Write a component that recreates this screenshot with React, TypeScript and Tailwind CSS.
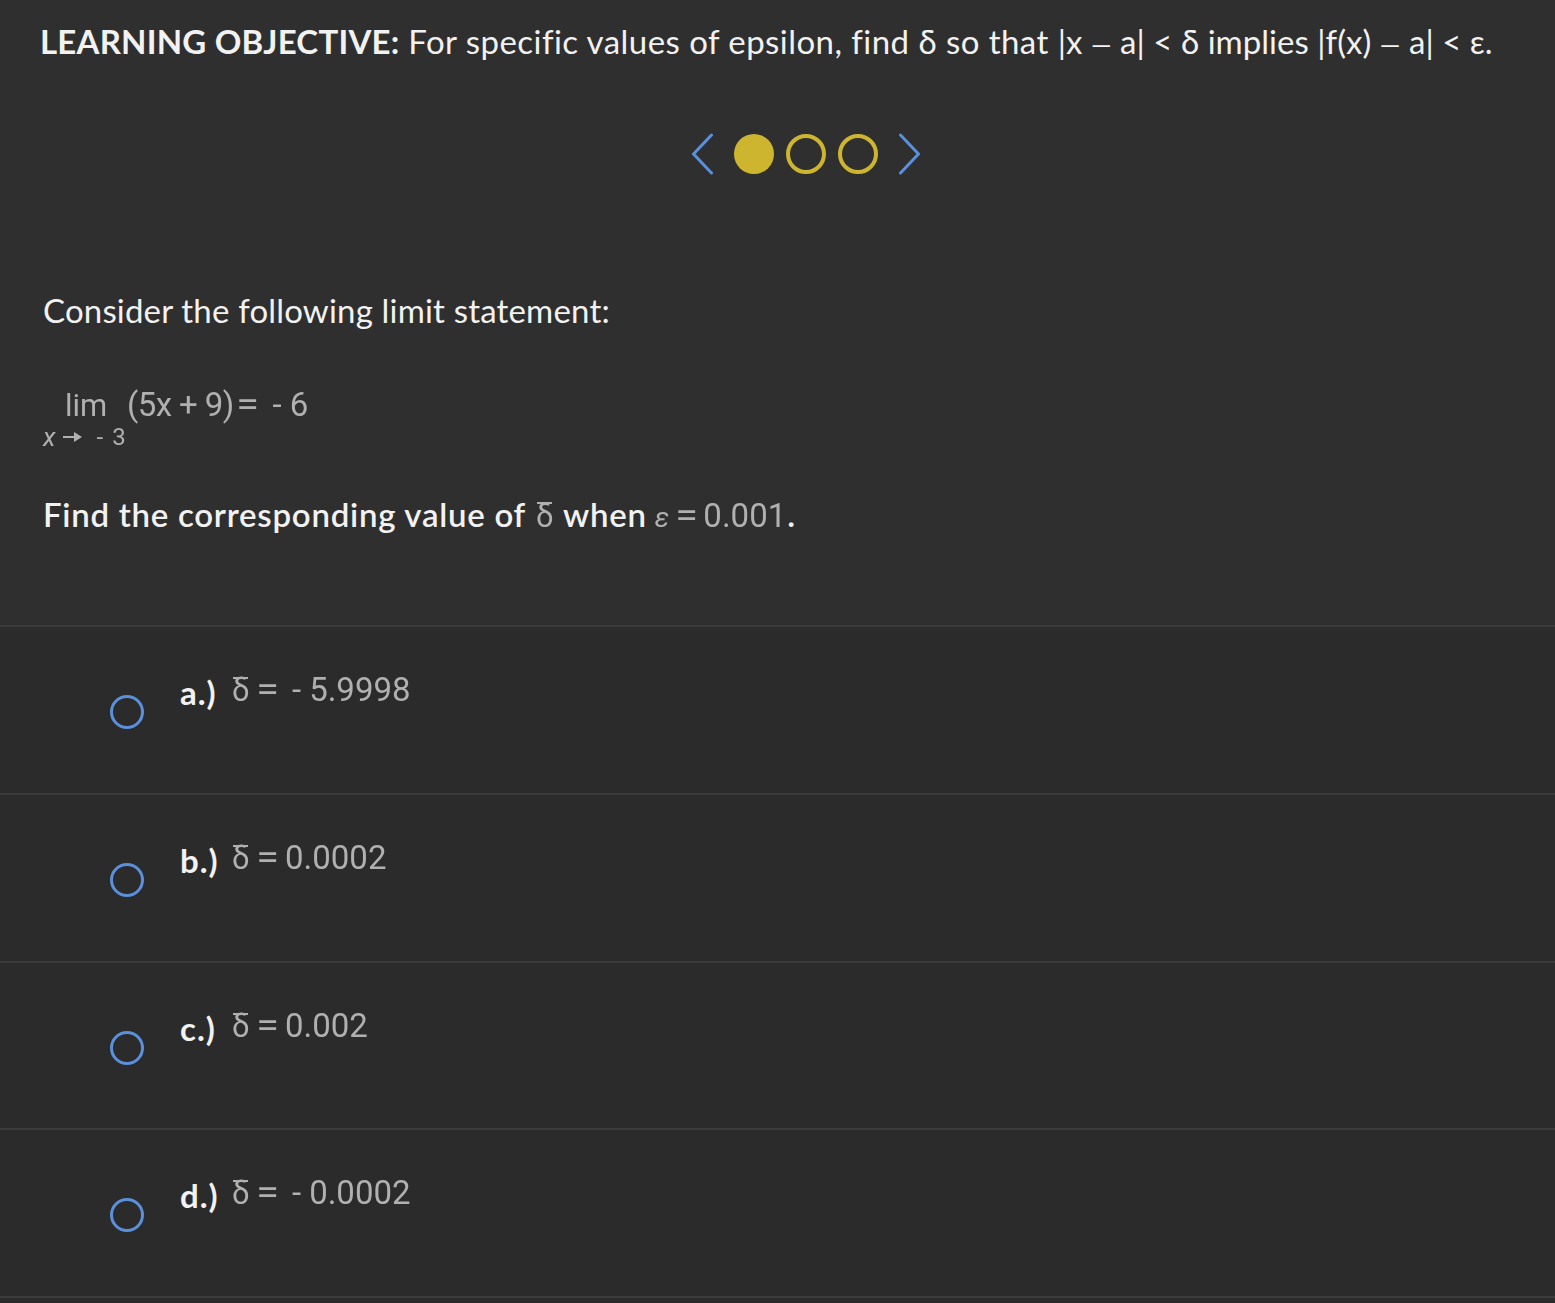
const body = "font-['Lato','Liberation_Sans',sans-serif]";
const math = "font-['Roboto','Liberation_Sans',sans-serif] text-[#b0b0b0] font-normal blur-[0.3px]";

function Delta() {
  return (
    <span className="relative inline-block w-[16px] text-[31px]">
      δ
      <span className="absolute left-[1px] right-[0px] top-[6px] h-[2px] bg-[#b0b0b0]" />
    </span>
  );
}

function Eq() {
  return <span className="inline-block w-[21px] text-center scale-x-125">=</span>;
}

function Dash() {
  return <span className="text-[26px] leading-none">—</span>;
}

function Answer({ label, value, negative }: { label: string; value: string; negative?: boolean }) {
  return (
    <div className="h-[167.75px] border-t-2 border-[#3b3b3b] flex items-start pl-[110px]">
      <div className="mt-[68px] w-[34px] h-[34px] rounded-full border-[3px] border-[#5a90dc] shrink-0" />
      <div className="ml-[36px] mt-[45px] flex items-baseline">
        <span className={`${body} w-[52px] text-[33px] tracking-[1px] leading-[40px] font-bold text-[#f2f2f2]`}>{label}</span>
        <span className={`${math} flex items-baseline text-[33px] leading-[40px] whitespace-pre -translate-y-[4px]`}>
          <Delta />
          <span className="ml-[9px]"><Eq /></span>
          {negative ? <span className="ml-[14px] mr-[8px]">-</span> : <span className="ml-[7px]" />}
          <span>{value}</span>
        </span>
      </div>
    </div>
  );
}

export default function App() {
  return (
    <div className={`${body} w-full h-[1303px] overflow-hidden bg-[#2f2f2f] text-[#f2f2f2]`}>
      <h1 className="pl-[40px] pt-[20px] text-[33px] leading-[42px] whitespace-nowrap tracking-[0.45px]">
        <span className="font-bold tracking-[0.2px]">LEARNING OBJECTIVE:</span> For specific values of epsilon, find δ so that{" "}
        <span className="tracking-[0.03px]">
          |x <Dash /> a| &lt; δ implies |f(x) <Dash /> a| &lt; ε.
        </span>
      </h1>

      <div className="flex items-center justify-center mt-[70px] pl-[57px] h-[44px] gap-[12px]">
        <svg width="21" height="44" viewBox="0 0 21 44" fill="none" stroke="#5a90dc" strokeWidth="3" strokeLinecap="round" strokeLinejoin="round">
          <path d="M19.5 3 L1.5 22 L19.5 41" />
        </svg>
        <div className="flex gap-[12px] mx-[9px]">
          <div className="w-[40px] h-[40px] rounded-full bg-[#cdb52f]" />
          <div className="w-[40px] h-[40px] rounded-full border-[4px] border-[#cdb52f]" />
          <div className="w-[40px] h-[40px] rounded-full border-[4px] border-[#cdb52f]" />
        </div>
        <svg width="21" height="44" viewBox="0 0 21 44" fill="none" stroke="#5a90dc" strokeWidth="3" strokeLinecap="round" strokeLinejoin="round">
          <path d="M1.5 3 L19.5 22 L1.5 41" />
        </svg>
      </div>

      <p className="pl-[43px] mt-[113px] text-[33px] leading-[42px] tracking-[0.18px]">Consider the following limit statement:</p>

      <div className={`${math} h-[60px] mt-[54px] ml-[43px]`}>
        <div className="pl-[22px] flex items-baseline text-[33px] leading-[40px] whitespace-pre">
          <span className="w-[62px] text-[31px]">lim</span>
          <span className="tracking-[-0.6px]">(5x + 9)</span>
          <span className="ml-[3px]"><Eq /></span>
          <span className="ml-[15px]">- 6</span>
        </div>
        <div className="flex items-center text-[24px] leading-[28px] whitespace-pre -mt-[3px]">
          <span className="italic text-[26px]">x</span>
          <svg className="ml-[7px]" width="19" height="12" viewBox="0 0 19 12" fill="#b0b0b0">
            <rect x="0" y="5" width="13" height="2" />
            <path d="M11 1 L19 6 L11 11 Z" />
          </svg>
          <span className="ml-[15px]">-</span>
          <span className="ml-[9px]">3</span>
        </div>
      </div>

      <p className="pl-[43px] mt-[48px] text-[33px] leading-[42px] font-semibold tracking-[0.73px] whitespace-pre flex items-baseline">
        Find the corresponding value of
        <span className={`${math} text-[33px] tracking-normal ml-[10px] mr-[11px]`}><Delta /></span>
        when
        <span className={`${math} ml-[8px] text-[33px] tracking-normal flex items-baseline`}>
          <span className="italic text-[28px]">ε</span>
          <span className="ml-[7px]"><Eq /></span>
          <span className="ml-[6px]">0.001</span>
        </span>
        <span className="ml-[1px]">.</span>
      </p>

      <div className="mt-[86px] bg-[#2b2b2b] h-[680px]">
        <Answer label="a.)" value="5.9998" negative />
        <Answer label="b.)" value="0.0002" />
        <Answer label="c.)" value="0.002" />
        <Answer label="d.)" value="0.0002" negative />
        <div className="border-t-2 border-[#3b3b3b]" />
      </div>
    </div>
  );
}
